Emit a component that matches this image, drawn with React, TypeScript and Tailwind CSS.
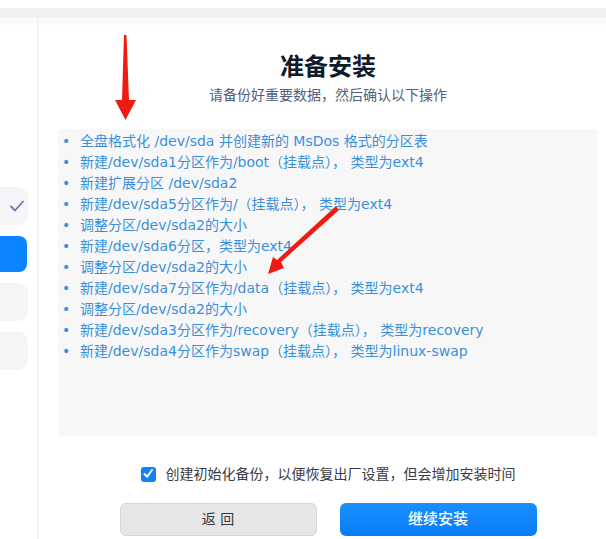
import React from "react";

const steps = [
  "全盘格式化 /dev/sda 并创建新的 MsDos 格式的分区表",
  "新建/dev/sda1分区作为/boot（挂载点）， 类型为ext4",
  "新建扩展分区 /dev/sda2",
  "新建/dev/sda5分区作为/（挂载点）， 类型为ext4",
  "调整分区/dev/sda2的大小",
  "新建/dev/sda6分区，类型为ext4",
  "调整分区/dev/sda2的大小",
  "新建/dev/sda7分区作为/data（挂载点）， 类型为ext4",
  "调整分区/dev/sda2的大小",
  "新建/dev/sda3分区作为/recovery（挂载点）， 类型为recovery",
  "新建/dev/sda4分区作为swap（挂载点）， 类型为linux-swap",
];

const font = { fontFamily: '"DejaVu Sans", "Noto Sans CJK SC", sans-serif' };

const Arrows = () => (
  <svg className="absolute left-0 top-0 pointer-events-none" width="606" height="539">
    <polygon points="124,35 126.5,35 129,100 136,100 125.5,120 115,100 122,100" fill="#f01a10" />
    <polygon points="336,206 339,210 281,262 284,268 268,274 273,257 277,260" fill="#f01a10" />
  </svg>
);

export default function App() {
  return (
    <div className="relative w-[606px] h-[539px] bg-white overflow-hidden" style={font}>
      <div className="h-[8px] bg-white" />
      <div className="h-[9px] bg-[#efefef]" />
      <div className="flex h-[522px]">
        <div className="w-[37px] flex flex-col">
          <div className="h-[10px] bg-gradient-to-b from-[#f6f6f6] to-white" />
          <div className="mt-[160px] flex flex-col gap-[11px]">
            <div className="h-[38px] w-[28px] rounded-r-[10px] bg-[#f5f5f7] flex items-center justify-end pr-[3px]">
              <svg width="16" height="14" viewBox="0 0 16 14">
                <path d="M2 7.5 L6 11.5 L14 2.5" fill="none" stroke="#6b7aa8" strokeWidth="1.8" strokeLinecap="round" strokeLinejoin="round" />
              </svg>
            </div>
            <div className="h-[36px] w-[27px] rounded-r-[8px] bg-[#0a84ff]" />
            <div className="h-[38px] w-[28px] rounded-r-[10px] bg-[#f5f5f7]" />
            <div className="h-[38px] w-[28px] rounded-r-[10px] bg-[#f5f5f7]" />
          </div>
        </div>
        <div className="w-[2px] bg-[#f3f3f3]" />
        <div className="flex-1 flex flex-col">
          <div className="h-[10px] bg-gradient-to-b from-[#f8f8f8] to-white" />
          <div className="pl-[19px] pr-[8px]">
            <h1 className="mt-[25px] text-center text-[24px] leading-[30px] font-bold text-[#0f1a2b]">准备安装</h1>
            <p className="mt-[4px] text-center text-[14px] leading-[18px] text-[#52607a]">请备份好重要数据，然后确认以下操作</p>
            <div className="mt-[25px] h-[307px] rounded-[4px] bg-[#f7f7f7] pt-[2px] pl-[4px]">
              <ul>
                {steps.map((s, i) => (
                  <li key={i} className="flex text-[14px] leading-[21px] text-[#3a8fdc]">
                    <span className="w-[18px]">•</span>
                    <span>{s}</span>
                  </li>
                ))}
              </ul>
            </div>
            <div className="mt-[28px] flex items-center justify-center">
              <div className="w-[15px] h-[15px] rounded-[3px] bg-[#1680f5] flex items-center justify-center">
                <svg width="12" height="12" viewBox="0 0 12 12">
                  <path d="M2.5 6 L5 8.8 L10 2" fill="none" stroke="white" strokeWidth="2" strokeLinecap="round" strokeLinejoin="round" />
                </svg>
              </div>
              <span className="ml-[10px] text-[14px] leading-[20px] text-[#383c45]">创建初始化备份，以便恢复出厂设置，但会增加安装时间</span>
            </div>
            <div className="mt-[19px] flex justify-center gap-[23px]">
              <button className="w-[197px] h-[33px] rounded-[6px] bg-[#e6e6e6] border border-[#d6d6d6] text-[14px] text-[#333842]">
                返 回
              </button>
              <button className="w-[197px] h-[33px] rounded-[6px] bg-gradient-to-b from-[#1a8fff] to-[#0a7cf5] text-[15px] font-medium text-white">
                继续安装
              </button>
            </div>
          </div>
        </div>
      </div>
      <Arrows />
    </div>
  );
}
